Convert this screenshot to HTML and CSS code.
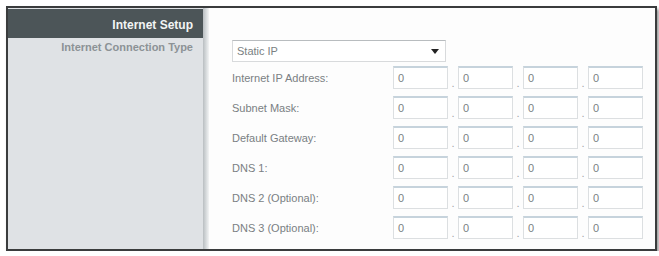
FILE: index.html
```html
<!DOCTYPE html>
<html>
<head>
<meta charset="utf-8">
<link rel="stylesheet" href="styles.css">
</head>
<body>
<div class="frame">
  <div class="side">
    <div class="side-head">Internet Setup</div>
    <div class="side-sub">Internet Connection Type</div>
  </div>
  <div class="divider"></div>
  <div class="content">
    <div class="select"><span>Static IP</span><span class="arrow"></span></div>
    <div class="rows">
      <div class="row"><div class="label">Internet IP Address:</div><div class="ip"><div class="box">0</div><i>.</i><div class="box">0</div><i>.</i><div class="box">0</div><i>.</i><div class="box">0</div></div></div>
      <div class="row"><div class="label">Subnet Mask:</div><div class="ip"><div class="box">0</div><i>.</i><div class="box">0</div><i>.</i><div class="box">0</div><i>.</i><div class="box">0</div></div></div>
      <div class="row"><div class="label">Default Gateway:</div><div class="ip"><div class="box">0</div><i>.</i><div class="box">0</div><i>.</i><div class="box">0</div><i>.</i><div class="box">0</div></div></div>
      <div class="row"><div class="label">DNS 1:</div><div class="ip"><div class="box">0</div><i>.</i><div class="box">0</div><i>.</i><div class="box">0</div><i>.</i><div class="box">0</div></div></div>
      <div class="row"><div class="label">DNS 2 (Optional):</div><div class="ip"><div class="box">0</div><i>.</i><div class="box">0</div><i>.</i><div class="box">0</div><i>.</i><div class="box">0</div></div></div>
      <div class="row"><div class="label">DNS 3 (Optional):</div><div class="ip"><div class="box">0</div><i>.</i><div class="box">0</div><i>.</i><div class="box">0</div><i>.</i><div class="box">0</div></div></div>
    </div>
  </div>
</div>
</body>
</html>
```
FILE: styles.css
```css
html, body {
  margin: 0;
  padding: 0;
  background: #ffffff;
  font-family: "Liberation Sans", Arial, sans-serif;
}
.frame {
  margin: 6px 0 0 6px;
  width: 647px;
  height: 241px;
  border: 2px solid #3a3c3d;
  display: flex;
  background: #fdfdfd;
  box-shadow: 2px 3px 3px rgba(0, 0, 0, 0.4);
}
.side {
  width: 195px;
  background: #dfe2e5;
  padding-top: 1px;
}
.side-head {
  height: 29px;
  background: #4c5558;
  color: #f2f4f4;
  font-weight: bold;
  font-size: 12px;
  text-align: right;
  padding-right: 10px;
  line-height: 32px;
  box-sizing: border-box;
}
.side-sub {
  color: #8c9296;
  font-weight: bold;
  font-size: 11px;
  text-align: right;
  padding-right: 10px;
  margin-top: 3px;
}
.divider {
  width: 6px;
  background: linear-gradient(to right, #b9bec1, #d5d9db 50%, #f3f4f5);
}
.content {
  flex: 1;
  padding: 32px 0 0 23px;
}
.select {
  width: 214px;
  height: 22px;
  border: 1px solid #d8dadc;
  border-top-color: #b8bcbf;
  display: flex;
  align-items: center;
  justify-content: space-between;
  font-size: 11px;
  color: #7a7f83;
  padding: 0 6px 0 4px;
  box-sizing: border-box;
  background: #ffffff;
}
.arrow {
  width: 0;
  height: 0;
  border-left: 4px solid transparent;
  border-right: 4px solid transparent;
  border-top: 5px solid #222;
}
.rows {
  display: flex;
  flex-direction: column;
  gap: 7px;
  margin-top: 4px;
}
.row {
  display: flex;
  align-items: center;
  height: 23px;
}
.label {
  width: 161px;
  font-size: 11px;
  color: #7a7f83;
}
.ip {
  display: flex;
  align-items: flex-end;
}
.box {
  width: 55px;
  height: 23px;
  box-sizing: border-box;
  border: 1px solid #dcdfe1;
  border-top: 2px solid #c6d3dc;
  font-size: 11px;
  color: #7a7f83;
  padding-left: 4px;
  line-height: 20px;
  background: #ffffff;
}
.ip i {
  width: 10px;
  text-align: center;
  font-style: normal;
  font-size: 11px;
  color: #a0a4a7;
  line-height: 12px;
}
```
